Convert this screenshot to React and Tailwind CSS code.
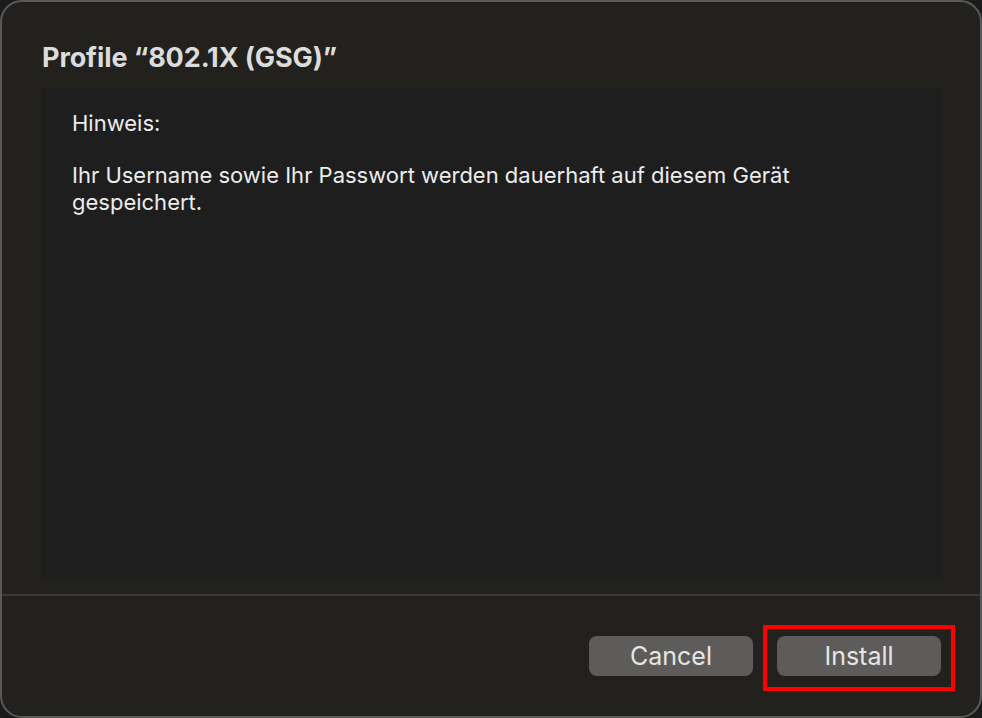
export default function App() {
    const font = { fontFamily: 'Inter, "Noto Sans", sans-serif' };

    return (
        <div className="w-[982px] h-[718px] bg-[#1b1b1b]" style={font}>
            <div className="w-full h-full rounded-[22px] border-2 border-[#5a5a5a] bg-[#22211e] flex flex-col overflow-hidden">
                <div className="pt-[40px] pl-[40px] text-[27px] leading-[32px] font-bold text-[#dcdcdc] tracking-[-0.1px]">
                    Profile “802.1X (GSG)”
                </div>

                <div className="mt-[14px] ml-[39px] mr-[38px] h-[492px] bg-[#1e1e1e] pl-[31px] pr-[60px] pt-[22px] text-[22px] leading-[27px] text-[#ececec]">
                    <p>Hinweis:</p>
                    <p className="mt-[25px]">
                        Ihr Username sowie Ihr Passwort werden dauerhaft auf diesem Gerät gespeichert.
                    </p>
                </div>

                <div className="mt-[14px] h-[2px] bg-[#3b3a38]" />

                <div className="flex-1 flex justify-end items-start pt-[40px] pr-[39px] gap-[24px]">
                    <button className="w-[164px] h-[40px] rounded-[8px] bg-[#5d5c5a] text-[25px] text-[#e6e6e6] leading-none">
                        Cancel
                    </button>
                    <div className="relative">
                        <button className="w-[164px] h-[40px] rounded-[8px] bg-[#5d5c5a] text-[25px] text-[#e6e6e6] leading-none">
                            Install
                        </button>
                        <div className="absolute -left-[14px] -top-[11px] w-[192px] h-[66px] border-[4px] border-[#ff0000] pointer-events-none" />
                    </div>
                </div>
            </div>
        </div>
    );
}
